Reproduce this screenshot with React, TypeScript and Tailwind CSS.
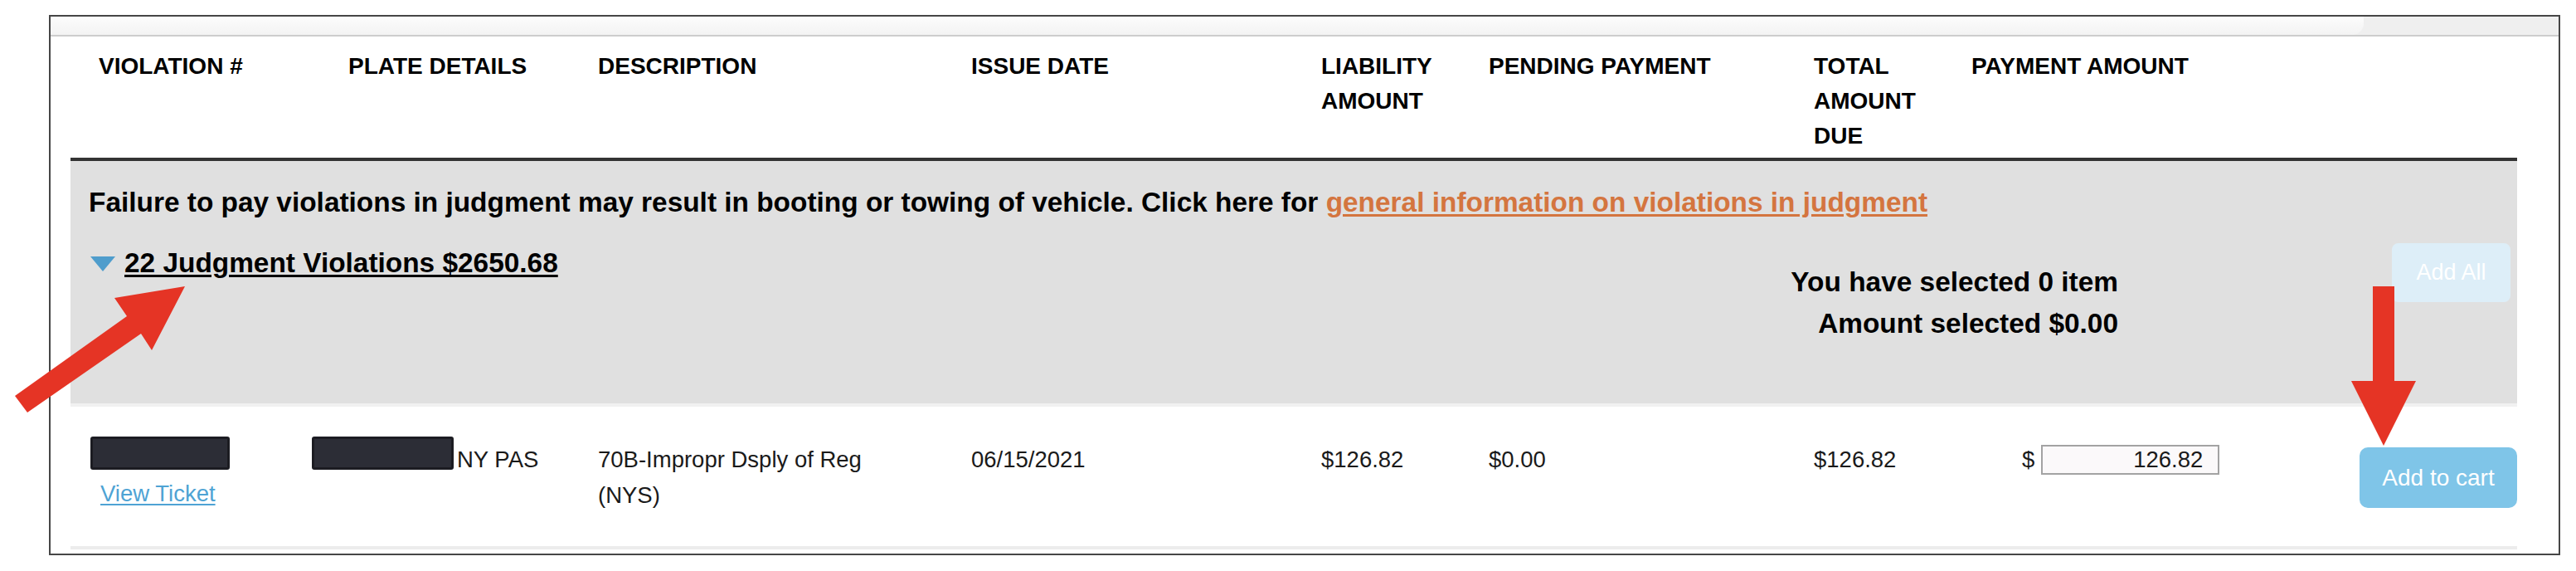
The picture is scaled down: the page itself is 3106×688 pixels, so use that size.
import React from "react";

const COLS =
  "grid grid-cols-[301px_301px_450px_422px_202px_392px_190px_470px_188px]";

function Redact({ className }: { className: string }) {
  return (
    <div
      className={
        "h-[40px] rounded-[3px] border-[3px] border-[#1c1c22] bg-[#2c2d36] shrink-0 " +
        className
      }
    />
  );
}

export default function App() {
  return (
    <div className="relative w-[3106px] h-[688px] bg-white pt-[18px] pl-[59px] font-['Liberation_Sans',Arial,sans-serif] text-black overflow-hidden">
      <div className="w-[3028px] h-[651px] border-2 border-[#464646] flex flex-col">
        {/* top band */}
        <div className="h-[24px] shrink-0 flex border-b-2 border-[#cdcdcd] bg-[#efefef]">
          <div className="w-[2789px] h-full bg-gradient-to-b from-[#fcfcfc] to-[#f3f3f3] rounded-br-[14px]" />
        </div>

        <div className="ml-[24px] w-[2950px] flex flex-col">
          {/* header */}
          <div
            className={
              COLS +
              " h-[150px] pt-[15px] pl-[34px] border-b-4 border-[#333333] text-[28px] font-bold leading-[42px]"
            }
          >
            <div>VIOLATION #</div>
            <div>PLATE DETAILS</div>
            <div>DESCRIPTION</div>
            <div>ISSUE DATE</div>
            <div>
              LIABILITY
              <br />
              AMOUNT
            </div>
            <div>PENDING PAYMENT</div>
            <div>
              TOTAL
              <br />
              AMOUNT
              <br />
              DUE
            </div>
            <div>PAYMENT AMOUNT</div>
            <div />
          </div>

          {/* judgment section */}
          <div className="h-[292px] bg-[#e0e0e0] pt-[30px] pl-[22px] pr-[8px] flex flex-col">
            <div className="text-[33.4px] font-bold leading-[40px] whitespace-nowrap">
              Failure to pay violations in judgment may result in booting or
              towing of vehicle. Click here for{" "}
              <span className="text-[#d4753f] underline underline-offset-[3px]">
                general information on violations in judgment
              </span>
            </div>
            <div className="mt-[29px] flex justify-between items-start">
              <div className="ml-[2px] flex items-center h-[48px] gap-[11px]">
                <svg width="30" height="18" viewBox="0 0 30 18" className="mt-[2px]">
                  <polygon points="0,0 30,0 15,18" fill="#4f9dcc" />
                </svg>
                <span className="text-[33.4px] font-bold leading-[48px] underline underline-offset-[3px] whitespace-nowrap">
                  22 Judgment Violations $2650.68
                </span>
              </div>
              <div className="flex items-start">
                <div className="mt-[22px] text-right text-[33.4px] font-bold leading-[50px] whitespace-nowrap">
                  <div>You have selected 0 item</div>
                  <div>Amount selected $0.00</div>
                </div>
                <div className="ml-[330px] w-[143px] h-[71px] rounded-[8px] bg-[#ddeef8] text-white text-[27px] flex items-center justify-center">
                  Add All
                </div>
              </div>
            </div>
          </div>

          <div className="h-[4px] bg-[#f1f1f1]" />

          {/* data row */}
          <div
            className={
              COLS +
              " h-[168px] pt-[36px] pl-[34px] text-[27.5px] leading-[43px] text-[#1a1a1a]"
            }
          >
            <div className="flex flex-col items-start">
              <Redact className="w-[168px] ml-[-10px]" />
              <a className="mt-[7px] ml-[2px] text-[#4ea3d4] underline underline-offset-[3px]">
                View Ticket
              </a>
            </div>
            <div className="flex items-start">
              <Redact className="w-[171px] ml-[-44px]" />
              <span className="pt-[6px] ml-[4px] whitespace-nowrap">NY PAS</span>
            </div>
            <div className="pt-[6px]">
              70B-Impropr Dsply of Reg
              <br />
              (NYS)
            </div>
            <div className="pt-[6px]">06/15/2021</div>
            <div className="pt-[6px]">$126.82</div>
            <div className="pt-[6px]">$0.00</div>
            <div className="pt-[6px]">$126.82</div>
            <div className="pt-[6px]">
              <div className="h-[43px] flex items-center pl-[61px]">
                <span>$</span>
                <div className="ml-[8px] w-[215px] h-[36px] border-2 border-[#a3a3a3] bg-[#fbf9fa] flex items-center justify-end pr-[18px]">
                  126.82
                </div>
              </div>
            </div>
            <div className="pt-[13px]">
              <div className="ml-[-2px] w-[190px] h-[73px] rounded-[10px] bg-[#7fc5e8] text-white text-[28px] flex items-center justify-center">
                Add to cart
              </div>
            </div>
          </div>

          <div className="h-[4px] bg-[#ececec]" />
        </div>
      </div>

      {/* annotation arrows */}
      <svg
        className="absolute left-0 top-0 pointer-events-none"
        width="3106"
        height="688"
        viewBox="0 0 3106 688"
      >
        <polygon
          points="18,477 153,381 138,359 223,345 183,422 170,402 33,497"
          fill="#e53425"
        />
        <polygon
          points="2861,345 2887,345 2887,459 2913,459 2874,537 2835,459 2861,459"
          fill="#e53425"
        />
      </svg>
    </div>
  );
}
